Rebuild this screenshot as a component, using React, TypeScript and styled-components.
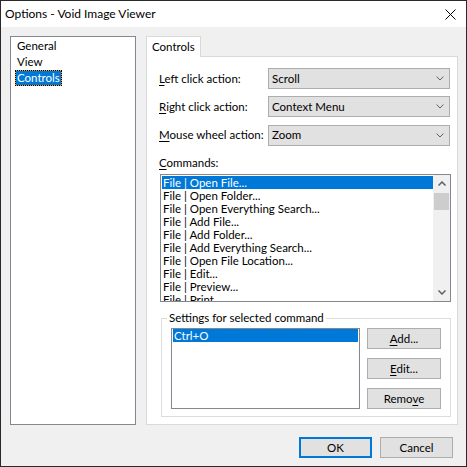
import React from "react";
import styled, { createGlobalStyle } from "styled-components";

const GlobalStyle = createGlobalStyle`
  html, body { margin: 0; padding: 0; background: #f0f0f0; }
  body {
    font-family: Lato, "Noto Sans", "DejaVu Sans", sans-serif;
    font-size: 11.5px;
    color: #000;
  }
  * { box-sizing: border-box; }
`;

const Window = styled.div`
  width: 467px;
  height: 467px;
  border: 1px solid #2a2a2a;
  background: #f0f0f0;
  display: flex;
  flex-direction: column;
`;

const TitleBar = styled.div`
  height: 26px;
  flex: none;
  background: #fff;
  display: flex;
  align-items: center;
  justify-content: space-between;
  padding: 0 10px 0 4px;
`;

const TitleText = styled.span`
  font-size: 12px;
  line-height: 16px;
`;

const Body = styled.div`
  flex: 1;
  display: flex;
  flex-direction: column;
  padding: 9px 8px 0 9px;
`;

const Main = styled.div`
  display: flex;
  gap: 10px;
  height: 389px;
`;

const NavList = styled.div`
  width: 126px;
  height: 389px;
  border: 1px solid #828790;
  background: #fff;
  padding: 1px 0 0 4px;
`;

const NavItem = styled.div<{ $selected?: boolean }>`
  width: fit-content;
  height: 16px;
  line-height: 16px;
  padding: 0 2px;
  background: ${(p) => (p.$selected ? "#0078d7" : "transparent")};
  color: ${(p) => (p.$selected ? "#fff" : "#000")};
  ${(p) =>
    p.$selected
      ? `box-shadow: inset 0 0 0 1px #f0a23a; outline: 1px dotted #000; outline-offset: -1px;`
      : ""}
`;

const TabArea = styled.div`
  width: 312px;
  display: flex;
  flex-direction: column;
`;

const TabStrip = styled.div`
  display: flex;
  height: 20px;
  flex: none;
`;

const Tab = styled.div`
  position: relative;
  z-index: 1;
  height: 21px;
  width: 55px;
  padding: 1px 0 0 5px;
  line-height: 17px;
  border: 1px solid #d9d9d9;
  border-bottom: none;
  background: #fff;
`;

const Panel = styled.div`
  flex: 1;
  border: 1px solid #d9d9d9;
  background: #fff;
  padding: 11px 7px 0 12px;
  display: flex;
  flex-direction: column;
`;

const FormGrid = styled.div`
  display: grid;
  grid-template-columns: 109px 182px;
  grid-auto-rows: 21px;
  row-gap: 7px;
  align-items: center;
  & > :nth-child(n + 5) {
    margin-top: 1px;
  }
`;

const Label = styled.label`
  line-height: 16px;
  white-space: nowrap;
`;

const Key = styled.span`
  text-decoration: underline;
  text-underline-offset: 2px;
`;

const Combo = styled.div`
  height: 21px;
  border: 1px solid #adadad;
  background: #e1e1e1;
  display: flex;
  align-items: center;
  justify-content: space-between;
  padding: 0 5px 0 3px;
  line-height: 16px;
`;

const SectionLabel = styled.div`
  margin-top: 10px;
  line-height: 16px;
`;

const CommandList = styled.div`
  margin: 3px 0 0 1px;
  width: 291px;
  height: 128px;
  flex: none;
  border: 1px solid #828790;
  background: #fff;
  display: flex;
  overflow: hidden;
`;

const Rows = styled.div`
  flex: 1;
  padding: 1px 0 0 1px;
  overflow: hidden;
`;

const Row = styled.div<{ $selected?: boolean }>`
  height: 13px;
  line-height: 13px;
  padding-left: 1px;
  white-space: nowrap;
  background: ${(p) => (p.$selected ? "#0078d7" : "transparent")};
  color: ${(p) => (p.$selected ? "#fff" : "#000")};
`;

const ScrollBar = styled.div`
  width: 17px;
  flex: none;
  background: #f0f0f0;
  display: flex;
  flex-direction: column;
  align-items: center;
`;

const ScrollArrow = styled.div`
  width: 17px;
  height: 17px;
  flex: none;
  display: flex;
  align-items: center;
  justify-content: center;
`;

const ScrollTrack = styled.div`
  flex: 1;
  width: 100%;
  display: flex;
  flex-direction: column;
  align-items: center;
`;

const Thumb = styled.div`
  width: 15px;
  height: 17px;
  margin-top: 1px;
  background: #cdcdcd;
`;

const Group = styled.fieldset`
  margin: 8px 0 0 2px;
  width: 290px;
  min-width: 0;
  border: 1px solid #dcdcdc;
  padding: 2px 9px 7px 9px;
  display: flex;
  gap: 7px;
`;

const Legend = styled.legend`
  margin-left: -4px;
  padding: 0 2px;
  line-height: 16px;
`;

const KeyList = styled.div`
  width: 189px;
  height: 81px;
  border: 1px solid #828790;
  background: #fff;
  padding: 0 1px;
`;

const ButtonColumn = styled.div`
  display: flex;
  flex-direction: column;
  gap: 9px;
`;

const Button = styled.button<{ $default?: boolean; $w?: number }>`
  width: ${(p) => (p.$w ? `${p.$w}px` : "74px")};
  height: 21px;
  padding: 0;
  font: inherit;
  color: #000;
  line-height: 16px;
  background: #e1e1e1;
  border: ${(p) => (p.$default ? "2px solid #0078d7" : "1px solid #adadad")};
  text-align: center;
`;

const Footer = styled.div`
  display: flex;
  justify-content: flex-end;
  gap: 8px;
  margin-top: 12px;
  padding-right: 5px;
`;

const Chevron = ({ up = false, bold = false }: { up?: boolean; bold?: boolean }) => (
  <svg width="8" height="5" viewBox="0 0 8 5" fill="none">
    <path
      d={up ? "M0.5 4.5 L4 1 L7.5 4.5" : "M0.5 0.5 L4 4 L7.5 0.5"}
      stroke="#606060"
      strokeWidth={bold ? 1.5 : 1}
    />
  </svg>
);

const CloseIcon = () => (
  <svg width="11" height="11" viewBox="0 0 11 11" fill="none">
    <path d="M0.5 0.5 L10.5 10.5 M10.5 0.5 L0.5 10.5" stroke="#000" strokeWidth="1" />
  </svg>
);

const commands = [
  "File | Open File...",
  "File | Open Folder...",
  "File | Open Everything Search...",
  "File | Add File...",
  "File | Add Folder...",
  "File | Add Everything Search...",
  "File | Open File Location...",
  "File | Edit...",
  "File | Preview...",
  "File | Print...",
];

export default function App() {
  return (
    <>
      <GlobalStyle />
      <Window>
        <TitleBar>
          <TitleText>Options - Void Image Viewer</TitleText>
          <CloseIcon />
        </TitleBar>
        <Body>
          <Main>
            <NavList>
              <NavItem>General</NavItem>
              <NavItem>View</NavItem>
              <NavItem $selected>Controls</NavItem>
            </NavList>
            <TabArea>
              <TabStrip>
                <Tab>Controls</Tab>
              </TabStrip>
              <Panel>
                <FormGrid>
                  <Label>
                    <Key>L</Key>eft click action:
                  </Label>
                  <Combo>
                    Scroll <Chevron />
                  </Combo>
                  <Label>
                    <Key>R</Key>ight click action:
                  </Label>
                  <Combo>
                    Context Menu <Chevron />
                  </Combo>
                  <Label>
                    <Key>M</Key>ouse wheel action:
                  </Label>
                  <Combo>
                    Zoom <Chevron />
                  </Combo>
                </FormGrid>
                <SectionLabel>
                  <Key>C</Key>ommands:
                </SectionLabel>
                <CommandList>
                  <Rows>
                    {commands.map((c, i) => (
                      <Row key={c} $selected={i === 0}>
                        {c}
                      </Row>
                    ))}
                  </Rows>
                  <ScrollBar>
                    <ScrollArrow>
                      <Chevron up bold />
                    </ScrollArrow>
                    <ScrollTrack>
                      <Thumb />
                    </ScrollTrack>
                    <ScrollArrow>
                      <Chevron bold />
                    </ScrollArrow>
                  </ScrollBar>
                </CommandList>
                <Group>
                  <Legend>Settings for selected command</Legend>
                  <KeyList>
                    <Row $selected>Ctrl+O</Row>
                  </KeyList>
                  <ButtonColumn>
                    <Button>
                      <Key>A</Key>dd...
                    </Button>
                    <Button>
                      <Key>E</Key>dit...
                    </Button>
                    <Button>
                      Remo<Key>v</Key>e
                    </Button>
                  </ButtonColumn>
                </Group>
              </Panel>
            </TabArea>
          </Main>
          <Footer>
            <Button $default $w={73}>
              OK
            </Button>
            <Button $w={73}>Cancel</Button>
          </Footer>
        </Body>
      </Window>
    </>
  );
}
